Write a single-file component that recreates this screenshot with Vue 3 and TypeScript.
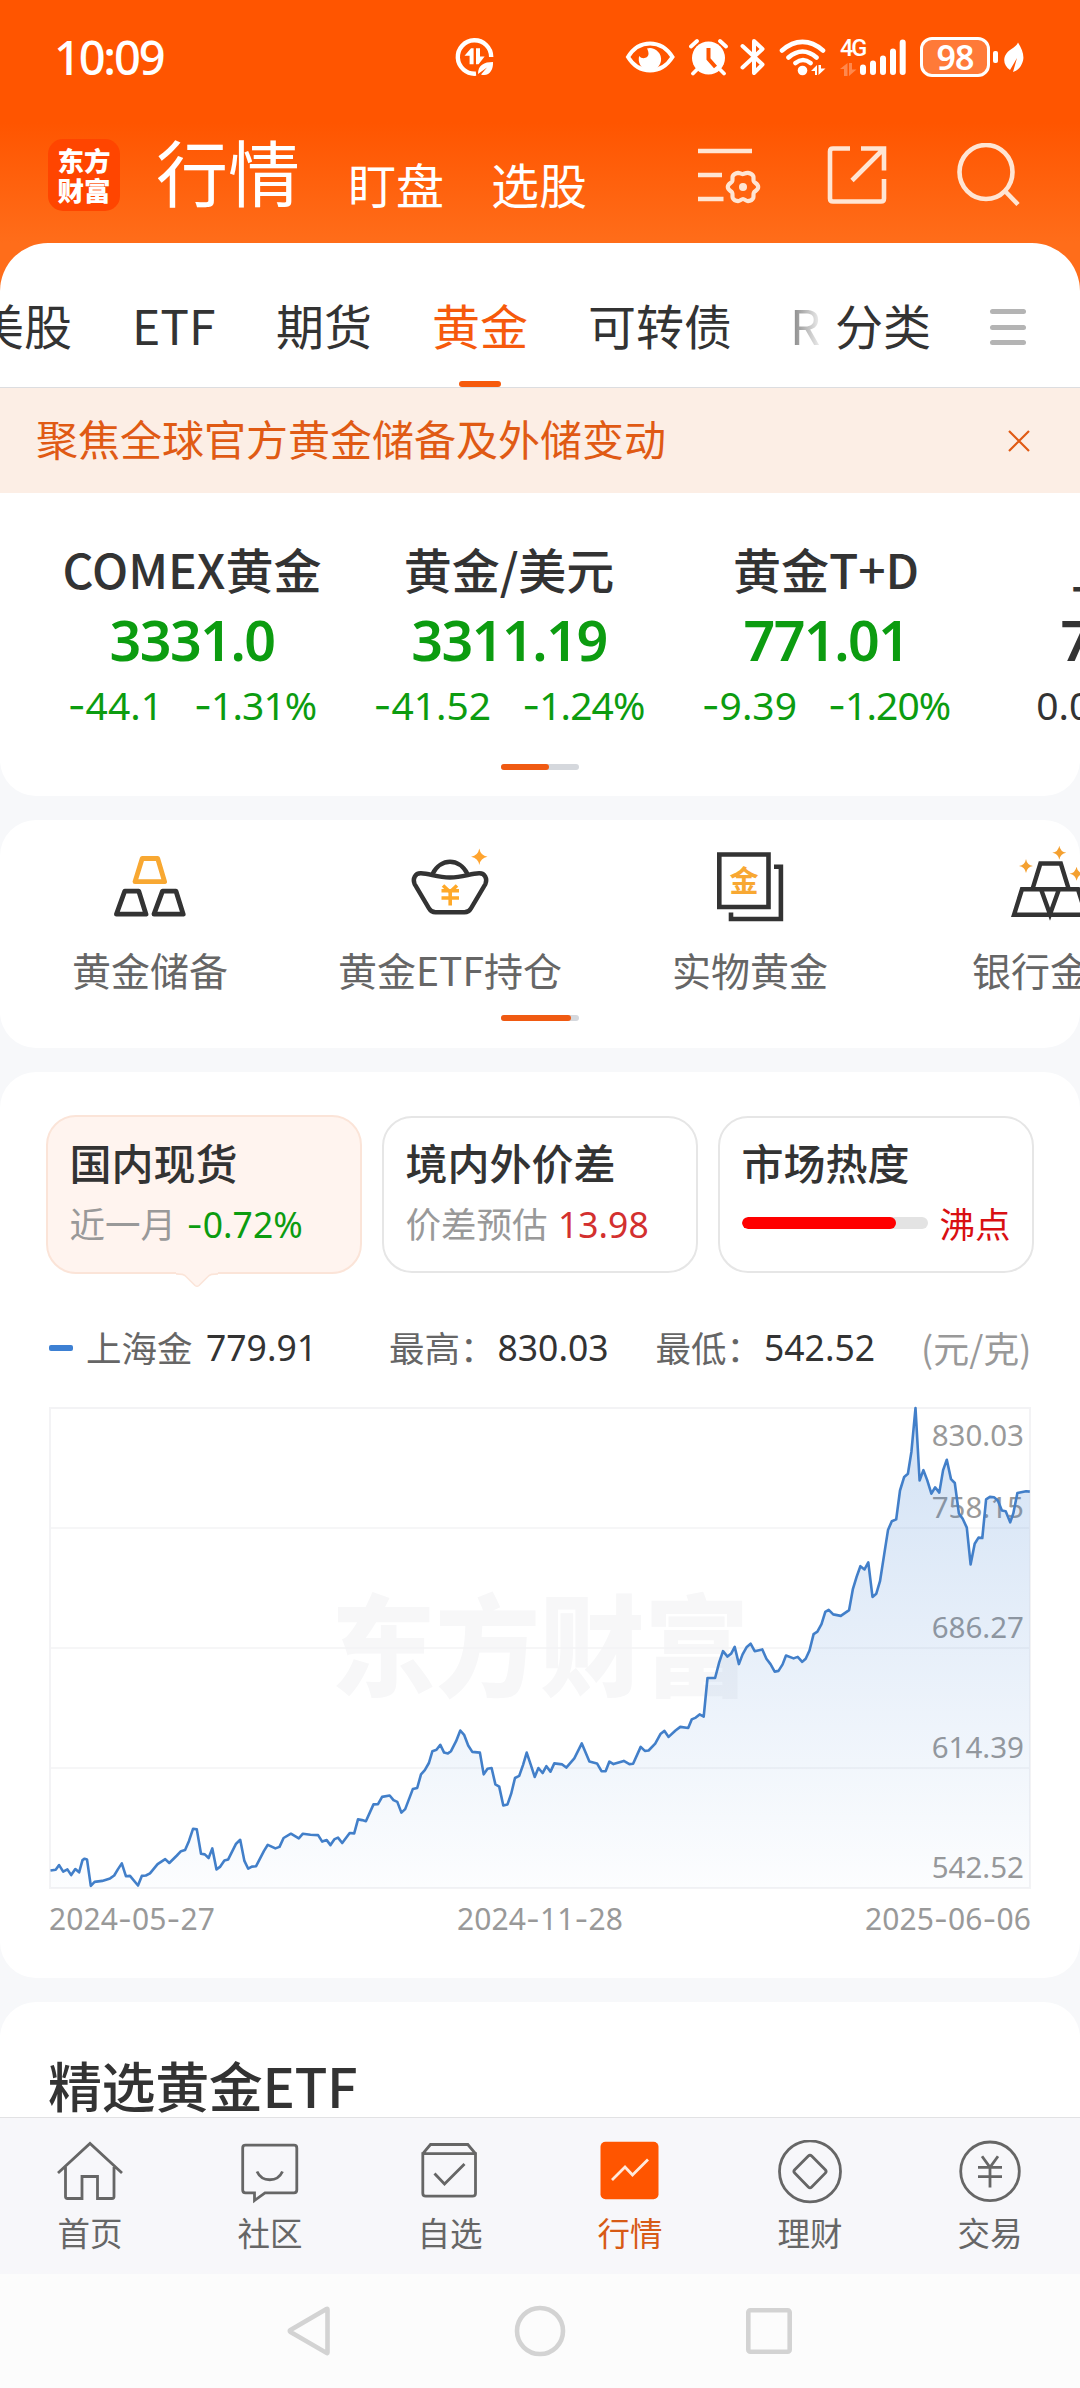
<script setup lang="ts">
import { h } from 'vue'
import type { FunctionalComponent } from 'vue'

/* Figures use a wider dash than the digit face provides. */
const Num: FunctionalComponent<{ v: string }> = (props) =>
  h(
    'span',
    { class: 'fig' },
    props.v.split(/(-)/).filter(Boolean).map((s) => (s === '-' ? h('span', { class: 'fig-dash' }, s) : s)),
  )
Num.props = ['v']

interface Quote { name: string; price: string; diff: string; pct: string; tone: 'down' | 'flat' }
const quotes: Quote[] = [
  { name: 'COMEX黄金', price: '3331.0', diff: '-44.1', pct: '-1.31%', tone: 'down' },
  { name: '黄金/美元', price: '3311.19', diff: '-41.52', pct: '-1.24%', tone: 'down' },
  { name: '黄金T+D', price: '771.01', diff: '-9.39', pct: '-1.20%', tone: 'down' },
  { name: '上海金', price: '779.91', diff: '0.00', pct: '0.00%', tone: 'flat' },
]

const axis = [
  { v: '830.03', y: 38 },
  { v: '758.15', y: 110 },
  { v: '686.27', y: 230 },
  { v: '614.39', y: 350 },
  { v: '542.52', y: 469.5 },
]
const dates = ['2024-05-27', '2024-11-28', '2025-06-06']

/* Price samples on a fine canvas grid; converted to plot pixels below. */
const samples: number[] = [
  145,1345, 160,1343, 170,1330, 182,1348, 194,1342, 205,1358, 217,1341, 228,1350, 238,1316, 244,1312, 251,1314,
  262,1388, 273,1377, 295,1374, 318,1367, 330,1359, 341,1341, 352,1325, 364,1361, 376,1360, 399,1387, 410,1360,
  422,1359, 434,1353, 456,1327, 478,1313, 490,1324, 512,1303, 524,1291, 536,1288, 547,1263, 559,1228, 570,1230,
  582,1298, 593,1300, 604,1310, 615,1283, 627,1342, 638,1334, 650,1317, 661,1314, 684,1270, 696,1259, 708,1318,
  719,1340, 730,1334, 742,1333, 765,1290, 776,1273, 798,1283, 810,1279, 822,1254, 843,1242, 866,1255, 878,1242,
  900,1245, 922,1246, 934,1264, 947,1260, 958,1274, 970,1257, 980,1253, 992,1268, 1014,1240, 1027,1241,
  1038,1202, 1050,1204, 1061,1207, 1083,1160, 1096,1159, 1108,1139, 1130,1135, 1141,1148, 1152,1153, 1164,1183,
  1175,1173, 1197,1117, 1210,1114, 1221,1076, 1232,1064, 1244,1044, 1254,1011, 1266,1007, 1277,993, 1288,1015,
  1299,1017, 1308,1011, 1323,983, 1335,953, 1346,965, 1358,995, 1370,1013, 1392,1015, 1403,1076, 1414,1060,
  1426,1058, 1437,1104, 1448,1110, 1460,1163, 1472,1160, 1483,1130, 1494,1086, 1506,1080, 1517,1050, 1528,1015,
  1540,1050, 1551,1083, 1562,1058, 1574,1072, 1585,1053, 1597,1068, 1608,1045, 1631,1048, 1643,1057, 1666,1031,
  1688,989, 1710,1040, 1732,1045, 1745,1067, 1757,1067, 1768,1040, 1780,1047, 1810,1038, 1826,1047, 1837,1046,
  1859,999, 1871,1010, 1882,1009, 1901,990, 1917,962, 1928,954, 1940,971, 1960,953, 1974,943, 1997,946,
  2007,922, 2019,917, 2030,908, 2042,914, 2053,806, 2075,806, 2087,762, 2098,731, 2111,746, 2122,737, 2132,719,
  2144,767, 2155,740, 2167,719, 2178,710, 2190,731, 2212,726, 2224,752, 2236,767, 2248,788, 2259,786, 2271,768,
  2281,743, 2303,751, 2315,747, 2328,761, 2338,752, 2349,729, 2361,683, 2372,676, 2384,655, 2395,621, 2405,615,
  2418,628, 2440,632, 2464,616, 2475,558, 2486,523, 2497,493, 2509,502, 2520,482, 2532,579, 2543,570, 2554,535,
  2566,460, 2577,392, 2588,367, 2601,362, 2612,281, 2624,243, 2635,234, 2645,173, 2657,50, 2669,253, 2680,224,
  2691,252, 2703,290, 2714,272, 2726,287, 2737,224, 2748,195, 2760,249, 2771,260, 2783,345, 2794,360, 2806,385,
  2817,488, 2829,430, 2840,413, 2851,414, 2862,306, 2873,299, 2885,300, 2896,309, 2908,337, 2919,339, 2932,370,
  2941,345, 2953,288, 2978,283, 2989,284,
]
const pts: string[] = []
for (let i = 0; i < samples.length; i += 2) {
  pts.push(`${((samples[i] - 145) / 2.904 + 0.5).toFixed(1)},${((samples[i + 1] - 50) / 2.8).toFixed(1)}`)
}
const linePath = 'M' + pts.join('L')
const areaPath = linePath + 'L980,480L0.5,480Z'
</script>

<template>
  <div class="app">
    <header class="top">
      <div class="status">
        <span class="clock">10:09</span>
        <svg class="sync" width="40" height="40" viewBox="454 37 40 40" fill="#fff">
          <path d="M491.200 57A16.700 16.700 0 1 0 476 73.600" fill="none" stroke="#fff" stroke-width="4.400" />
          <path d="M464.500 55.800l6.500-7.600h2.600v16h-4v-8.400zM476 48.200h4v8.400h4.600l-6 7.600H476z" />
          <path d="M478 74c0-9 6-12 15-12 .5 8-4 15-12 12.500l6-7z" />
        </svg>
        <svg class="eye" width="50" height="34" viewBox="625 40 50 34">
          <path d="M628 57c11-18 33-18 44.500 0-11.500 18-33.500 18-44.500 0z" fill="none" stroke="#fff" stroke-width="4" />
          <path d="M647 48.500a11.200 11.200 0 1 1-7.800 7.500c3 4 9.500 2 9.300-2.500-.1-2.500-1-4-1.500-5z" fill="#fff" />
        </svg>
        <svg class="alarm" width="40" height="38" viewBox="689 38 40 38" stroke="#fff" fill="none">
          <circle cx="708.500" cy="58" r="16.500" fill="#fff" stroke="none" />
          <path d="M691 46.500l6-5.500M726 46.500l-6-5.500M697 69.500l-4 4M720 69.500l4 4" stroke-width="3.800" stroke-linecap="round" />
          <path d="M708.500 48v11l7 8" stroke="#ff5500" stroke-width="4" />
        </svg>
        <svg class="bt" width="26" height="38" viewBox="741 38 26 38" fill="none" stroke="#fff" stroke-width="4">
          <path d="M743.500 46l20 18.500-8.500 8.500V60M755 54V41l8.500 8-20 18.500" stroke-linejoin="round" stroke-linecap="round" />
        </svg>
        <svg class="wifi" width="48" height="38" viewBox="780 38 48 38" fill="none" stroke="#fff" stroke-width="4.600" stroke-linecap="round">
          <path d="M783 50.500c13-11.500 28-11.500 41 0M789.500 57.500c9-8 19-8 28 0M796.500 63c5-4 10-4 15 0" />
          <circle cx="803.500" cy="70.500" r="4.800" fill="#fff" stroke="none" />
          <path d="M812 71l6-6v10h-2v-4zM819.500 65v10l7-6.500h-4.500V65z" fill="#fff" stroke="none" />
        </svg>
        <div class="net">
          <span>4G</span>
          <svg width="17" height="13" viewBox="0 0 17 13" fill="#fff" opacity=".3"><path d="M0 6l7.500-6v13H4V6zM9 0v13l7.500-6.500H12V0z" /></svg>
        </div>
        <svg class="bars" width="48" height="38" viewBox="860 38 48 38" stroke="#fff" stroke-width="6" stroke-linecap="round">
          <path d="M864 67.500V72M874 63.500V72M884 58.500V72M894 51.500V72M903.700 42.500V72" />
        </svg>
        <span class="battery">98</span><i class="nub"></i>
        <svg class="leaf" width="20" height="31" viewBox="1005 41 20 31">
          <path d="M1019 41.500c5 8 7 15 4 21-2 5-6 8-9 8.500l4-14-7 12c-5-3-7-9-5-14 3-7 10-7 13-13.500z" fill="#fff" />
        </svg>
      </div>
      <div class="bar">
        <div class="logo"><span>东方</span><span>财富</span></div>
        <h1>行情</h1>
        <span class="sub s1">盯盘</span>
        <span class="sub s2">选股</span>
        <div class="acts">
          <svg width="64" height="64" viewBox="699 143 64 64" fill="none" stroke="#ffe5d3" stroke-width="4.600">
            <path d="M699 151h54M699 175h24M699 199h25.500" />
            <path d="M744 174c1.700-.6 3.300-1.300 4.900-1.200 2 .2 4.600 1.700 5.400 3.400.6 1.600-.3 3.700.6 5.300 1 1.600 4.300 2.400 4.300 5.500s-3.300 3.900-4.300 5.500c-.9 1.600 0 3.700-.6 5.300-.8 1.700-3.400 3.200-5.400 3.400-1.600.1-3.200-2.200-4.900-2.200s-3.300 2.300-4.900 2.200c-2-.2-4.600-1.700-5.400-3.400-.6-1.600.3-3.700-.6-5.300-1-1.600-4.300-2.400-4.300-5.500s3.300-3.900 4.300-5.500c.9-1.600 0-3.700.6-5.300.8-1.700 3.400-3.200 5.400-3.400 1.600-.1 3.200 1.700 4.900 1.200z" stroke-width="4.200" />
            <circle cx="744" cy="187" r="4" fill="#ffe5d3" stroke="none" />
          </svg>
          <svg width="60" height="64" viewBox="828 143 60 64" fill="none" stroke="#ffe5d3" stroke-width="4.600">
            <path d="M851 148.500h-17q-3 0-3 3v47q0 3 3 3h48q3 0 3-3V179M862 148.500h23v22M884 149.500l-31 31" />
          </svg>
          <svg width="64" height="64" viewBox="958 143 64 64" fill="none" stroke="#ffe5d3" stroke-width="4.600">
            <ellipse cx="987" cy="172" rx="26.500" ry="27" /><path d="M1005.500 190.500l13.500 14" />
          </svg>
        </div>
      </div>
    </header>

    <div class="tabwrap">
      <nav class="tabs">
        <div class="scroll">
          <span>美股</span><span class="etf">ETF</span><span>期货</span><span class="on">黄金</span><span>可转债</span><span class="fade">R</span>
        </div>
        <span class="cat">分类</span>
        <i class="burger"><b></b><b></b><b></b></i>
      </nav>
    </div>

    <div class="notice">
      <span>聚焦全球官方黄金储备及外储变动</span>
      <svg width="22" height="22" viewBox="0 0 22 22" stroke="#e05a14" stroke-width="2.200"><path d="M1 1l20 20M21 1L1 21" /></svg>
    </div>

    <main>
      <section class="card quotes">
        <div class="qrow">
          <div v-for="q in quotes" :key="q.name" class="q" :class="q.tone">
            <div class="qn">{{ q.name }}</div>
            <div class="qp"><Num :v="q.price" /></div>
            <div class="qc"><Num :v="q.diff" /><Num class="pct" :v="q.pct" /></div>
          </div>
        </div>
        <div class="pager"><i :style="{ width: '48px' }"></i></div>
      </section>

      <section class="card tools">
        <div class="trow">
          <div class="t">
            <svg width="90" height="84" viewBox="105 842 90 84" fill="none" stroke="#333" stroke-width="4.800" stroke-linejoin="round">
              <path d="M142.200 858.500h15.500l6.900 23.200H135z" stroke="#f8a832" />
              <path d="M124.700 891.200h14.100l7.200 23h-29.600zM162.500 891.200H176l7.200 23H154z" />
            </svg>
            <span>黄金储备</span>
          </div>
          <div class="t">
            <svg width="90" height="84" viewBox="405 842 90 84" fill="none" stroke="#333" stroke-width="4.400" stroke-linejoin="round">
              <path d="M432.500 874c4-8 11-12.200 17.500-12.200s13.500 4.200 17.500 12.200" />
              <path d="M421 873.300c9 .3 16 4.200 29 4.200s20-3.900 29-4.200c6-.3 8.500 5.500 6.500 10.500l-14.500 24.500q-2.200 3.900-6.500 3.900h-29q-4.300 0-6.500-3.900L414.500 883.800c-2-5 .5-10.800 6.500-10.500z" />
              <path d="M443 885.500l7 6.500 7-6.500M441.500 890.800H459M441.500 898H459M450.200 891v14.500" stroke="#ffa929" stroke-width="3.600" />
              <path d="M479.300 848.500q1.200 7 8.200 8.200-7 1.200-8.200 8.200-1.200-7-8.200-8.200 7-1.200 8.200-8.200z" fill="#ffa42f" stroke="none" />
            </svg>
            <span>黄金ETF持仓</span>
          </div>
          <div class="t">
            <svg width="90" height="84" viewBox="705 842 90 84" fill="none" stroke="#333" stroke-width="4.600">
              <path d="M719.300 854.500h49.200v52.500h-49.200z" /><path d="M774 866.700h6.900V919H731v-6.500" />
              <text x="744" y="892" text-anchor="middle" class="jin">金</text>
            </svg>
            <span>实物黄金</span>
          </div>
          <div class="t">
            <svg width="90" height="84" viewBox="1005 842 90 84" fill="none" stroke="#333" stroke-width="4.400">
              <path d="M1032.400 889.300l8-25.800h20.400l8 25.800M1014 914.800l8-25.500h56l8 25.500zM1041 889.300l9 25 9-25" />
              <path d="M1026 859q1 6 7 7-6 1-7 7-1-6-7-7 6-1 7-7zM1059.300 845.700q1 6 7 7-6 1-7 7-1-6-7-7 6-1 7-7zM1076.500 866.700q1 6 7 7-6 1-7 7-1-6-7-7 6-1 7-7z" fill="#f4a030" stroke="none" />
            </svg>
            <span>银行金条</span>
          </div>
        </div>
        <div class="pager"><i :style="{ width: '70px' }"></i></div>
      </section>

      <section class="card market">
        <div class="segs">
          <div class="seg on">
            <div class="st">国内现货</div>
            <div class="sr">近一月 <Num class="down" v="-0.72%" /></div>
            <svg class="tip" width="42" height="17" viewBox="0 0 42 17"><path d="M0 0H42V2L32 5L23 14.500Q21 16 19 14.500L10 5L0 2z" fill="#fff4ef" /><path d="M0 3C5 3 8 3 10 5.500L19 14.500Q21 16 23 14.500L32 5.500C34 3 37 3 42 3" fill="none" stroke="#fbe4d8" stroke-width="1.500" /></svg>
          </div>
          <div class="seg">
            <div class="st">境内外价差</div>
            <div class="sr">价差预估 <Num class="up" v="13.98" /></div>
          </div>
          <div class="seg">
            <div class="st">市场热度</div>
            <div class="sr heat"><i class="meter"><b :style="{ width: '83%' }"></b></i><span>沸点</span></div>
          </div>
        </div>

        <div class="legend">
          <i></i><span class="l1">上海金</span><Num class="l2" v="779.91" />
          <span class="l3">最高：</span><Num class="l4" v="830.03" />
          <span class="l5">最低：</span><Num class="l6" v="542.52" />
          <span class="unit">(元/克)</span>
        </div>

        <svg class="chart" width="980" height="480" viewBox="0 0 980 480">
          <defs>
            <linearGradient id="fill" x1="0" y1="0" x2="0" y2="480" gradientUnits="userSpaceOnUse">
              <stop offset="0" stop-color="#3d80d3" stop-opacity=".23" />
              <stop offset="1" stop-color="#3d80d3" stop-opacity=".015" />
            </linearGradient>
          </defs>
          <text x="0" y="0" transform="translate(490 280) scale(.95 1)" text-anchor="middle" class="wm">东方财富</text>
          <path d="M0 120H980M0 240H980M0 360H980" stroke="#f3f3f5" stroke-width="1.500" />
          <rect x="0" y="0" width="980" height="480" fill="none" stroke="#f3f3f5" stroke-width="2" />
          <text v-for="a in axis" :key="a.v" x="974" :y="a.y" text-anchor="end" class="ax">{{ a.v }}</text>
          <path :d="areaPath" fill="url(#fill)" />
          <path :d="linePath" fill="none" stroke="#427fc9" stroke-width="2.600" stroke-linejoin="round" />
        </svg>
        <div class="dates"><Num v-for="d in dates" :key="d" :v="d" /></div>
      </section>

      <section class="card etfs"><h2>精选黄金ETF</h2></section>
    </main>

    <nav class="dock">
      <div>
        <svg width="68" height="64" viewBox="56 2140 68 64"><path d="M58 2173l32-29.500 32 29.500M65.500 2167v29.500q0 2 2 2H82v-22h15.500v22H112q2 0 2-2V2167" /></svg>
        <span>首页</span>
      </div>
      <div>
        <svg width="68" height="64" viewBox="236 2140 68 64"><path d="M245.500 2145.200h48.500q2.800 0 2.800 2.800v42q0 2.800-2.800 2.800h-29l-10.500 7.700v-7.700h-9q-2.800 0-2.800-2.800v-42q0-2.800 2.800-2.800zM257 2171.500c5 11 20.500 11 25.500 0" /></svg>
        <span>社区</span>
      </div>
      <div>
        <svg width="68" height="64" viewBox="416 2140 68 64"><path d="M422.800 2153.700h52.700v39.500q0 3-3 3h-46.700q-3 0-3-3zl7.700-9.200h37.300l7.700 9.200M434.500 2173.500l10 10.500 20-20" /></svg>
        <span>自选</span>
      </div>
      <div class="on">
        <svg width="68" height="64" viewBox="596 2140 68 64"><rect x="600.500" y="2141.700" width="58" height="57.600" rx="5" fill="#ff5500" stroke="none" /><path d="M612 2180l13-13 7.500 8 15.500-15.500" stroke="#ffe9dc" /></svg>
        <span>行情</span>
      </div>
      <div>
        <svg width="68" height="64" viewBox="775.300 2140 68 64"><circle cx="809.300" cy="2171.400" r="30.500" /><path d="M807.600 2156q1.700-1.600 3.400 0l13.600 13.700q1.600 1.700 0 3.400L811 2187q-1.700 1.600-3.400 0L794 2173.100q-1.600-1.700 0-3.400z" /></svg>
        <span>理财</span>
      </div>
      <div>
        <svg width="68" height="64" viewBox="955 2140 68 64"><circle cx="989" cy="2171.300" r="29.300" /><path d="M981 2156.300l8 11 8-11M977 2167.300h24M977 2176.700h24M989 2167v20.500" /></svg>
        <span>交易</span>
      </div>
    </nav>
    <footer class="sys">
      <svg width="46" height="52" viewBox="285 2305 46 52"><path d="M327.500 2309.500v43q0 1-1 .4L290.500 2332q-1.500-1 0-2l36-21q1-.5 1 .5z" stroke-linejoin="round" /></svg>
      <svg width="52" height="52" viewBox="0 0 52 52"><circle cx="26" cy="26" r="23" /></svg>
      <svg width="46" height="52" viewBox="0 0 46 52"><rect x="2.300" y="5.300" width="41.400" height="41.400" rx="2" /></svg>
    </footer>
  </div>
</template>

<style>
body { margin: 0; }
.fig { font-family: "Noto Sans", sans-serif; }
.fig-dash { font-family: "Inter", sans-serif; }
</style>

<style scoped>
.app {
  width: 1080px; height: 2388px; overflow: hidden; display: flex; flex-direction: column;
  font-family: "Noto Sans CJK SC", sans-serif; color: #333; background: #f7f8fa; white-space: nowrap;
}
svg { display: block; flex: none; }
.top { height: 243px; flex: none; background: linear-gradient(#ff5500 0, #ff5500 122px, #ff6d1a 243px); color: #fff; }
.status { height: 114px; display: flex; align-items: center; padding-left: 54px; }
.clock { width: 112px; font: 500 47px/60px "Noto Sans", sans-serif; letter-spacing: -2.200px; }
.sync { margin-left: 288px; }
.eye { margin-left: 131px; }
.alarm { margin-left: 14px; }
.bt { margin-left: 11px; }
.wifi { margin-left: 13px; }
.net { margin-left: 13px; width: 19px; height: 38px; display: flex; flex-direction: column; justify-content: space-between; }
.net span { font: 500 23.500px/20px "Roboto", sans-serif; letter-spacing: -2px; }
.bars { margin-left: 0; }
.battery {
  box-sizing: border-box; width: 70px; height: 40px; margin-left: 13px; border: 3px solid #fff; border-radius: 12px;
  background: rgba(255, 255, 255, .22); font: 600 34px/34px "Noto Sans", sans-serif; text-align: center; letter-spacing: -1px;
}
.nub { width: 5px; height: 12px; border-radius: 2px; background: #fff; margin-left: 3px; }
.leaf { margin-left: 6px; }
.bar { display: flex; height: 129px; padding-left: 48px; align-items: flex-start; }
.logo {
  width: 72px; height: 72px; margin-top: 25px; border-radius: 15px; background: #ff4500; display: flex; flex-direction: column;
  align-items: center; justify-content: center; font-weight: 900; font-size: 26.500px; line-height: 30px;
}
h1 { margin: 16px 0 0 36px; font-size: 72px; line-height: 80px; font-weight: 400; width: 144px; }
.sub { font-size: 48px; line-height: 56px; margin-top: 41px; }
.s1 { margin-left: 48px; }
.s2 { margin-left: 47px; }
.acts { display: flex; margin-top: 29px; margin-left: 111px; }
.acts svg + svg { margin-left: 65px; }
.acts svg:last-child { margin-left: 70px; }

.tabwrap { height: 145px; flex: none; background: #ff6d1a; }
.tabs {
  box-sizing: border-box; height: 145px; background: #fff; border-radius: 48px 48px 0 0; border-bottom: 1px solid #dcdde0;
  display: flex; font-size: 48px; overflow: hidden;
}
.scroll { width: 836px; flex: none; display: flex; margin-left: -24px; gap: 60px; padding-top: 53px; line-height: 56px; box-sizing: border-box; }
.scroll span { flex: none; height: 91px; box-sizing: border-box; }
.scroll .etf { width: 84px; }
.scroll .on { color: #f65a0c; display: flex; flex-direction: column; align-items: center; }
.scroll .on::after { content: ""; width: 42px; height: 6px; border-radius: 3px; background: #f65a0c; margin-top: 29px; }
.scroll .fade { background: linear-gradient(90deg, #808080, #eee 30px); background-clip: text; -webkit-background-clip: text; color: transparent; width: 30px; margin-left: -2px; }
.cat { margin-left: 23px; line-height: 56px; padding-top: 53px; }
.burger { margin: 66px 0 0 59px; width: 36px; height: 36px; display: flex; flex-direction: column; justify-content: space-between; }
.burger b { height: 5px; border-radius: 3px; background: #b4b4b4; }

.notice { height: 105px; flex: none; background: #fceee5; color: #e05a14; display: flex; align-items: center; justify-content: space-between; padding: 0 50px 0 36px; font-size: 42px; box-sizing: border-box; }
.notice span { line-height: 60px; padding-bottom: 5px; }
main { height: 1624px; flex: none; overflow: hidden; display: flex; flex-direction: column; gap: 24px; }
.card { background: #fff; border-radius: 36px; flex: none; box-sizing: border-box; overflow: hidden; }
.quotes { height: 303px; border-radius: 0 0 36px 36px; padding-top: 48px; }
.qrow { display: flex; padding-left: 33.500px; }
.q { width: 317px; flex: none; text-align: center; }
.qn { font-size: 48px; line-height: 54px; font-weight: 500; }
.qp { font-size: 55.500px; line-height: 60px; font-weight: 600; margin-top: 15px; letter-spacing: -1.500px; }
.qc { font-size: 39px; line-height: 44px; margin-top: 13px; display: flex; justify-content: center; gap: 31px; }
.pct { letter-spacing: -.9px; }
.q .fig { display: block; }
.down .qp, .down .qc, .down.fig { color: #0c9c10; }
.up { color: #d3302f; }
.sr .fig { margin-left: 2.500px; }
.pager { width: 78px; height: 6px; border-radius: 3px; background: #d5d8dd; margin: 36px auto 0; }
.pager i { display: block; height: 6px; border-radius: 3px; background: #f05a12; }

.tools { height: 228px; padding-top: 22px; }
.tools .pager { margin-top: 24px; }
.trow { display: flex; }
.t { width: 300px; flex: none; display: flex; flex-direction: column; align-items: center; font-size: 39px; line-height: 44px; color: #666; gap: 21px; }
.jin { font-size: 29px; font-weight: 700; fill: #f8a832; stroke: none; }

.market { height: 906px; padding-top: 43px; }
.segs { display: flex; gap: 20px; padding: 0 45.500px; height: 159px; align-items: center; }
.seg { position: relative; box-sizing: border-box; width: 316px; height: 157px; border: 2px solid #e6e6e6; border-radius: 30px; padding: 19px 0 0 22px; }
.seg.on { height: 159px; padding-top: 20px; border-color: #fbe4d8; background: #fff4ef; }
.tip { position: absolute; left: 128.500px; top: 154px; }
.st { font-size: 42px; line-height: 50px; font-weight: 500; }
.sr { font-size: 35.500px; line-height: 44px; margin-top: 14px; color: #999; height: 44px; }
.heat { display: flex; align-items: center; color: #d90f12; }
.meter { width: 186px; height: 12px; border-radius: 6px; background: #e3e3e3; margin-right: 12px; overflow: hidden; }
.meter b { display: block; height: 12px; border-radius: 6px; background: #f00; }

.legend { display: flex; align-items: center; margin-top: 51px; height: 44px; line-height: 44px; padding-left: 49px; font-size: 35.500px; color: #666; }
.legend i { width: 24px; height: 6px; border-radius: 2px; background: #3d80d3; margin-top: 2px; }
.legend .fig { color: #333; }
.l1 { width: 107px; margin-left: 13px; }
.l2 { margin-left: 13px; width: 135px; }
.l2 + .l3 { margin-left: 48px; }
.l3, .l5 { width: 108.500px; }
.l4 { width: 158px; }
.l6 { width: 157px; }
.unit { color: #999; font-size: 36px; }
.chart { margin: 39px 0 0 50px; overflow: visible; }
.wm { font-size: 110px; font-weight: 900; fill: #f7f7f8; }
.ax { font-family: "Noto Sans", sans-serif; font-size: 29.500px; fill: #999; }
.dates { display: flex; justify-content: space-between; margin: 13px 49px 0; font-size: 30px; letter-spacing: .1px; line-height: 36px; color: #999; }
.etfs { height: 160px; padding-top: 52px; }
h2 { margin: 0 0 0 48px; font-size: 54px; line-height: 62px; font-weight: 500; letter-spacing: -.4px; }

.dock { height: 157px; flex: none; box-sizing: border-box; border-top: 1px solid #e2e2e4; background: #f7f7fa; display: flex; padding-top: 22px; }
.dock div { width: 180px; display: flex; flex-direction: column; align-items: center; font-size: 32.500px; line-height: 40px; color: #666; gap: 8px; }
.dock svg { fill: none; stroke: #666; stroke-width: 2.800; }
.dock .on { color: #d75a16; }
.sys { flex: 1; background: #fcfcfc; display: flex; padding: 31px 0 0 285px; }
.sys svg { fill: none; stroke: #d3d3d3; stroke-width: 4.600; }
.sys svg:nth-child(2) { margin-left: 183px; }
.sys svg:nth-child(3) { margin-left: 180px; }
</style>
